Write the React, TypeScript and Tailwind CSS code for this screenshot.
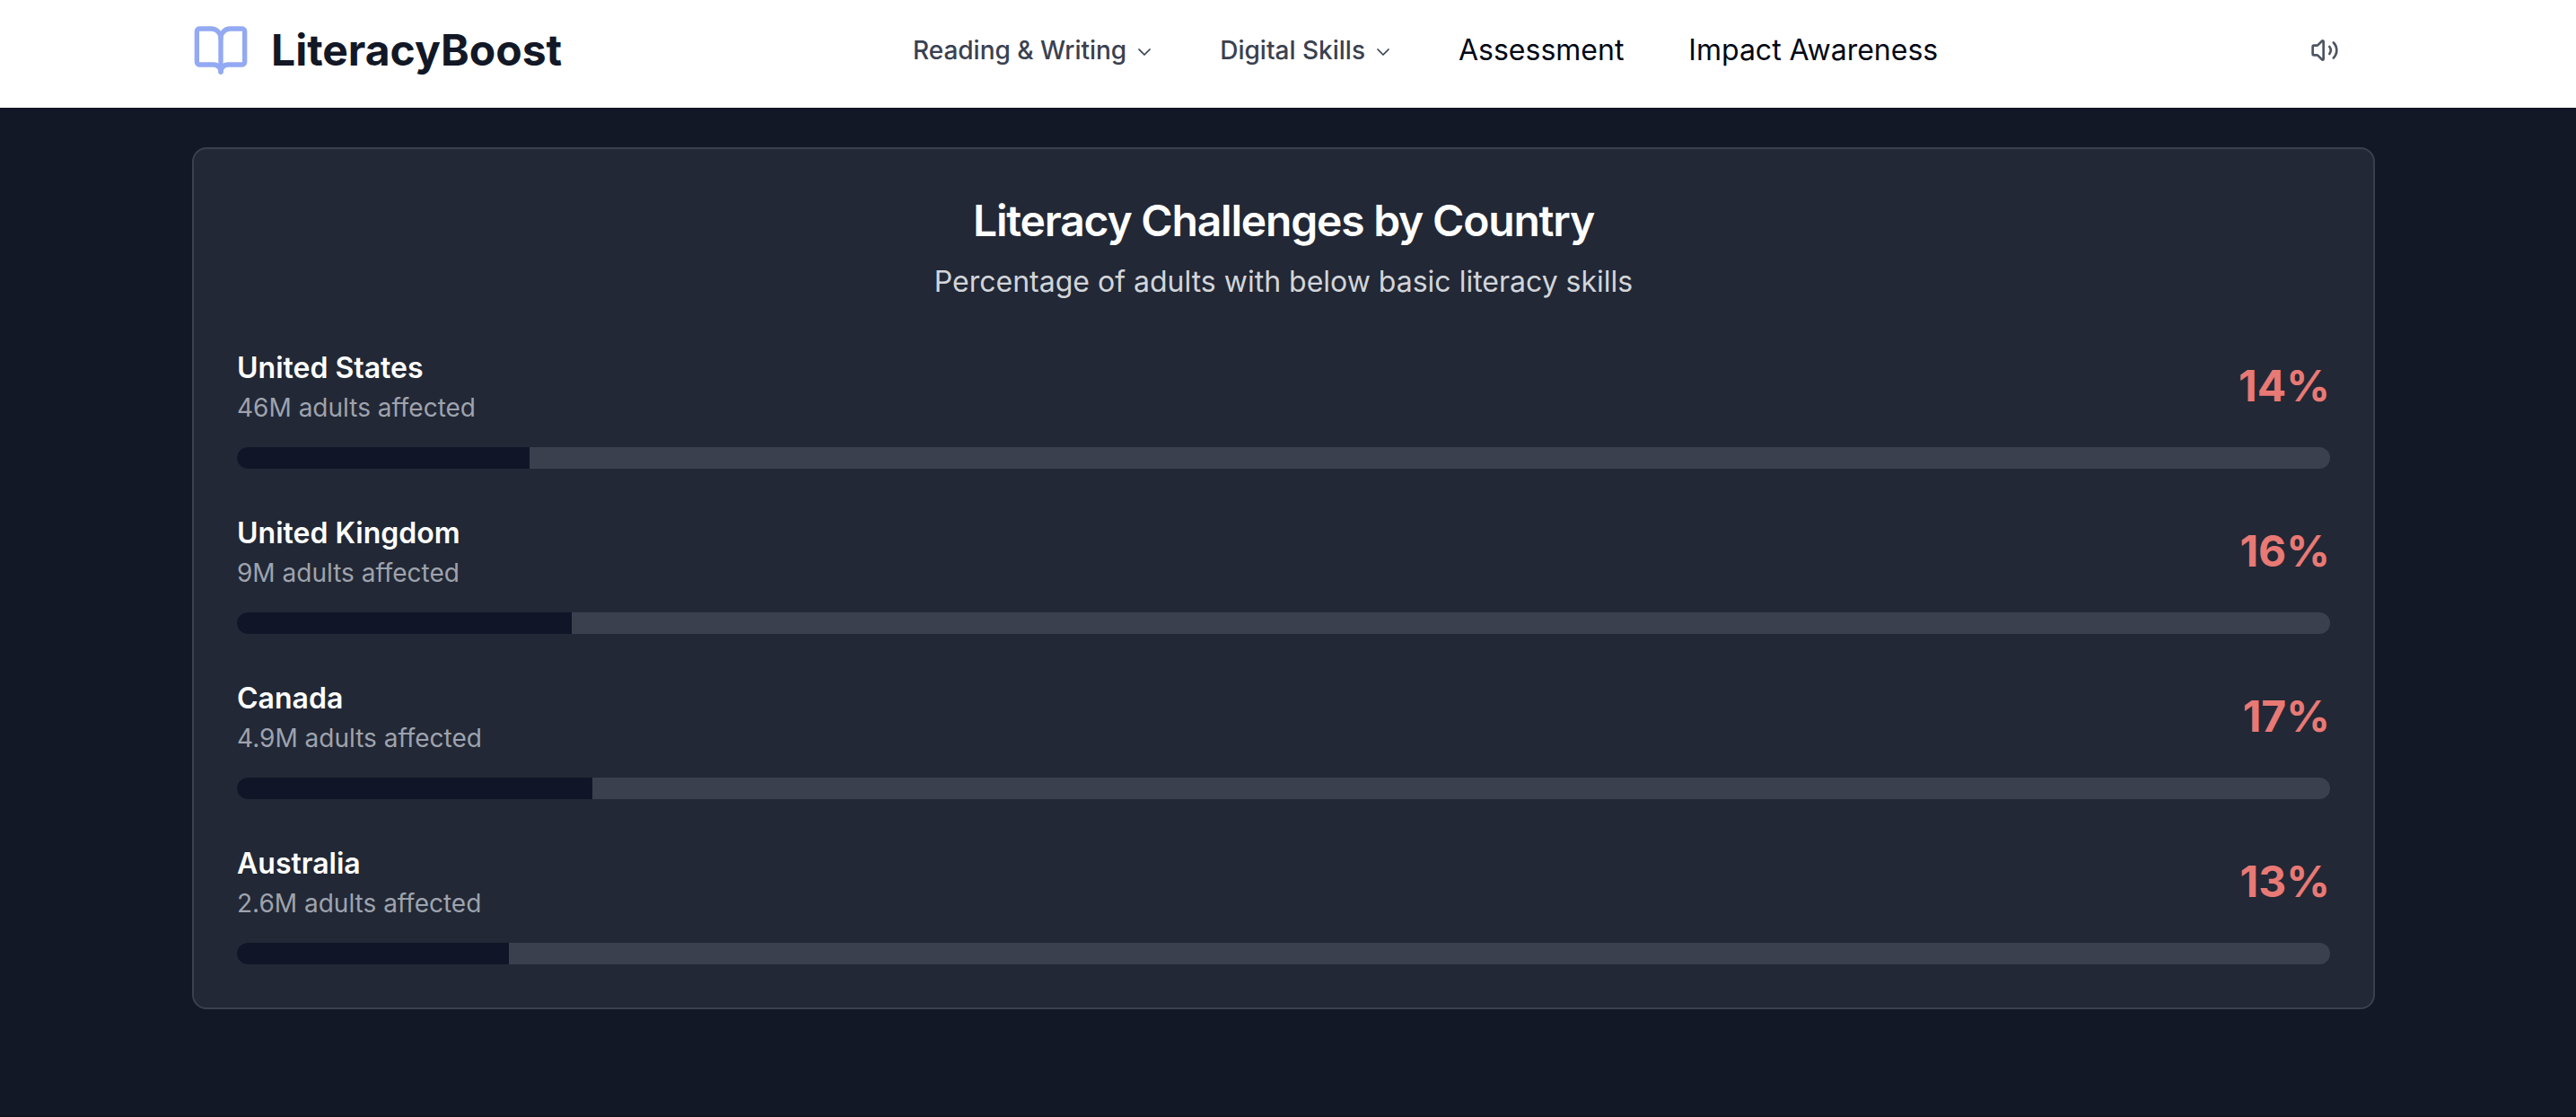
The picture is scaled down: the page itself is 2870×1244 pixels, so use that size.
import { BookOpen, ChevronDown, Volume2 } from 'lucide-react';

const countries = [
    { name: 'United States', affected: '46M', percentage: 14 },
    { name: 'United Kingdom', affected: '9M', percentage: 16 },
    { name: 'Canada', affected: '4.9M', percentage: 17 },
    { name: 'Australia', affected: '2.6M', percentage: 13 },
];

function Header() {
    return (
        <header className="relative z-10 bg-white pb-2 pr-[10px] shadow-sm">
            <div className="mx-auto flex h-28 max-w-[2560px] items-center justify-between px-16">
                <a href="#" className="flex items-center gap-6">
                    <BookOpen className="size-16 text-[#93a9f3]" />
                    <span className="text-[48px] leading-[64px] font-bold text-[#121826]">LiteracyBoost</span>
                </a>

                <nav className="flex items-center gap-[72px]">
                    {['Reading & Writing', 'Digital Skills'].map((label) => (
                        <button key={label} type="button" className="flex items-center gap-2 text-[28px] leading-10 font-medium text-[#3a4150]">
                            {label}
                            <ChevronDown className="mt-1 size-6" strokeWidth={1.75} />
                        </button>
                    ))}
                    <a href="#assessment" className="text-[32px] leading-[48px] text-[#030816]">Assessment</a>
                    <a href="#impact" className="text-[32px] leading-[48px] text-[#030816]">Impact Awareness</a>
                </nav>

                <button type="button" aria-label="Read aloud" className="py-4 pr-10 pl-6 text-[#4d5562]">
                    <Volume2 className="size-8" />
                </button>
            </div>
        </header>
    );
}

function CountryRow({ name, affected, percentage }: { name: string; affected: string; percentage: number }) {
    return (
        <div className="flex flex-col gap-6">
            <div className="flex items-center justify-between">
                <div>
                    <h4 className="text-[32px] leading-[48px] font-semibold text-white">{name}</h4>
                    <p className="text-[28px] leading-10 text-[#9ea3ae]">{affected} adults affected</p>
                </div>
                <span className="text-[48px] leading-[64px] font-bold text-[#e87975]">{percentage}%</span>
            </div>
            <div
                role="progressbar"
                aria-label={name}
                aria-valuenow={percentage}
                className="h-6 w-full overflow-hidden rounded-full bg-[#3b404f]"
            >
                <div className="h-full bg-[#101527]" style={{ width: `${percentage}%` }} />
            </div>
        </div>
    );
}

export default function App() {
    return (
        <div className="min-h-screen bg-[#121826] font-['Inter',sans-serif]">
            <Header />
            <main className="border-b-2 border-[#10141f] pr-[10px]">
                <div className="mx-auto max-w-[2560px] px-16 pt-11 pb-[118px]">
                    <section className="rounded-2xl border-2 border-[#3a404d] bg-[#222835] p-12">
                        <div className="mb-12 flex flex-col gap-3 text-center">
                            <h3 className="text-[48px] leading-[64px] font-semibold tracking-tight text-white">
                                Literacy Challenges by Country
                            </h3>
                            <p className="text-[32px] leading-[48px] text-[#d2d5da]">
                                Percentage of adults with below basic literacy skills
                            </p>
                        </div>
                        <div className="flex flex-col gap-12">
                            {countries.map((country) => (
                                <CountryRow key={country.name} {...country} />
                            ))}
                        </div>
                    </section>
                </div>
            </main>
        </div>
    );
}
